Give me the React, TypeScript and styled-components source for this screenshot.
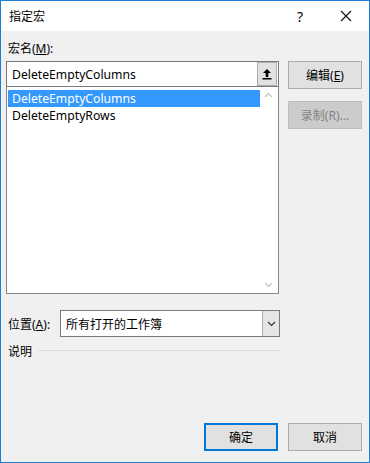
import React from 'react';
import styled, { createGlobalStyle } from 'styled-components';

const GlobalStyle = createGlobalStyle`
  html, body {
    margin: 0;
    padding: 0;
    background: #f0f0f0;
  }
  * {
    box-sizing: border-box;
  }
`;

const Window = styled.div`
  width: 370px;
  height: 463px;
  border: 1px solid #1a7fd6;
  background: #f0f0f0;
  display: flex;
  flex-direction: column;
  font-family: 'Noto Sans', 'Noto Sans CJK SC', sans-serif;
  font-size: 12px;
  color: #000;
`;

const TitleBar = styled.div`
  height: 30px;
  background: #fff;
  display: flex;
  align-items: center;
  padding-left: 8px;
  flex-shrink: 0;
`;

const Title = styled.div`
  flex: 1;
  font-size: 12px;
`;

const TitleButton = styled.div`
  width: 46px;
  height: 30px;
  display: flex;
  align-items: center;
  justify-content: center;
  font-size: 14px;
`;

const Body = styled.div`
  flex: 1;
  display: flex;
  flex-direction: column;
  padding: 0 7px 0 5px;
`;

const Label = styled.div`
  padding-left: 2px;
  height: 16px;
  line-height: 16px;
  margin-top: 10px;
  margin-bottom: 4px;
`;

const MainRow = styled.div`
  display: flex;
  gap: 9px;
`;

const LeftCol = styled.div`
  width: 273px;
  display: flex;
  flex-direction: column;
`;

const RightCol = styled.div`
  flex: 1;
  display: flex;
  flex-direction: column;
  gap: 12px;
`;

const TextBox = styled.div`
  height: 26px;
  background: #fff;
  border: 1px solid #7a7a7a;
  display: flex;
  align-items: center;
  padding-left: 5px;
  font-size: 12.2px;
`;

const TextValue = styled.div`
  flex: 1;
`;

const CollapseButton = styled.div`
  width: 20px;
  height: 24px;
  margin-right: 1px;
  border: 1px solid #adadad;
  background: #e1e1e1;
  display: flex;
  align-items: center;
  justify-content: center;
`;

const ListBox = styled.div`
  height: 207px;
  background: #fff;
  border: 1px solid #828790;
  border-top: none;
  display: flex;
  padding: 2px 1px 1px 1px;
`;

const ListItems = styled.div`
  flex: 1;
  padding-top: 1px;
`;

const ListItem = styled.div<{ selected?: boolean }>`
  height: 17px;
  line-height: 17px;
  padding-left: 4px;
  font-size: 12.2px;
  background: ${(p) => (p.selected ? '#3399ff' : 'transparent')};
  color: ${(p) => (p.selected ? '#fff' : '#000')};
`;

const ScrollBar = styled.div`
  width: 17px;
  display: flex;
  flex-direction: column;
  justify-content: space-between;
  align-items: center;
  padding: 3px 0 4px;
`;

const Button = styled.div<{ disabled?: boolean; primary?: boolean }>`
  height: 28px;
  width: 74px;
  display: flex;
  align-items: center;
  justify-content: center;
  background: ${(p) => (p.disabled ? '#cccccc' : '#e1e1e1')};
  border: ${(p) => (p.primary ? '2px solid #0078d7' : p.disabled ? '1px solid #bfbfbf' : '1px solid #adadad')};
  color: ${(p) => (p.disabled ? '#838383' : '#000')};
`;

const LocationRow = styled.div`
  display: flex;
  align-items: center;
  margin-top: 16px;
  width: 274px;
`;

const LocationLabel = styled.div`
  width: 54px;
  padding-left: 2px;
`;

const Select = styled.div`
  flex: 1;
  height: 27px;
  background: #fff;
  border: 1px solid #7a7a7a;
  display: flex;
  align-items: center;
  padding-left: 5px;
`;

const SelectValue = styled.div`
  flex: 1;
`;

const DropButton = styled.div`
  width: 17px;
  height: 25px;
  background: #e5e5e5;
  border-left: 1px solid #adadad;
  display: flex;
  align-items: center;
  justify-content: center;
`;

const DescRow = styled.div`
  display: flex;
  align-items: center;
  margin-top: 5px;
  width: 274px;
  padding-left: 2px;
`;

const DescLine = styled.div`
  flex: 1;
  height: 1px;
  background: #dcdcdc;
  margin-left: 6px;
  margin-top: -2px;
`;

const Footer = styled.div`
  margin-top: auto;
  margin-bottom: 11px;
  display: flex;
  justify-content: flex-end;
  gap: 10px;
`;

const Chevron = ({ up, color }: { up?: boolean; color: string }) => (
  <svg width="9" height="6" viewBox="0 0 9 6">
    <path d={up ? 'M1 5 L4.5 1.5 L8 5' : 'M1 1 L4.5 4.5 L8 1'} stroke={color} strokeWidth="1.2" fill="none" />
  </svg>
);

export default function App() {
  return (
    <>
      <GlobalStyle />
      <Window>
        <TitleBar>
          <Title>指定宏</Title>
          <TitleButton>?</TitleButton>
          <TitleButton>
            <svg width="12" height="12" viewBox="0 0 12 12">
              <path d="M1 1 L11 11 M11 1 L1 11" stroke="#111" strokeWidth="1.1" />
            </svg>
          </TitleButton>
        </TitleBar>
        <Body>
          <Label>
            宏名(<u>M</u>):
          </Label>
          <MainRow>
            <LeftCol>
              <TextBox>
                <TextValue>DeleteEmptyColumns</TextValue>
                <CollapseButton>
                  <svg width="10" height="12" viewBox="0 0 10 12">
                    <path d="M5 1 L9 5 L6.3 5 L6.3 9 L3.7 9 L3.7 5 L1 5 Z" fill="#000" />
                    <rect x="0.5" y="10" width="9" height="1.5" fill="#000" />
                  </svg>
                </CollapseButton>
              </TextBox>
              <ListBox>
                <ListItems>
                  <ListItem selected>DeleteEmptyColumns</ListItem>
                  <ListItem>DeleteEmptyRows</ListItem>
                </ListItems>
                <ScrollBar>
                  <Chevron up color="#c2c2c2" />
                  <Chevron color="#c2c2c2" />
                </ScrollBar>
              </ListBox>
            </LeftCol>
            <RightCol>
              <Button>
                编辑(<u>E</u>)
              </Button>
              <Button disabled>录制(R)...</Button>
            </RightCol>
          </MainRow>
          <LocationRow>
            <LocationLabel>
              位置(<u>A</u>):
            </LocationLabel>
            <Select>
              <SelectValue>所有打开的工作簿</SelectValue>
              <DropButton>
                <Chevron color="#333" />
              </DropButton>
            </Select>
          </LocationRow>
          <DescRow>
            说明
            <DescLine />
          </DescRow>
          <Footer>
            <Button primary>确定</Button>
            <Button>取消</Button>
          </Footer>
        </Body>
      </Window>
    </>
  );
}
